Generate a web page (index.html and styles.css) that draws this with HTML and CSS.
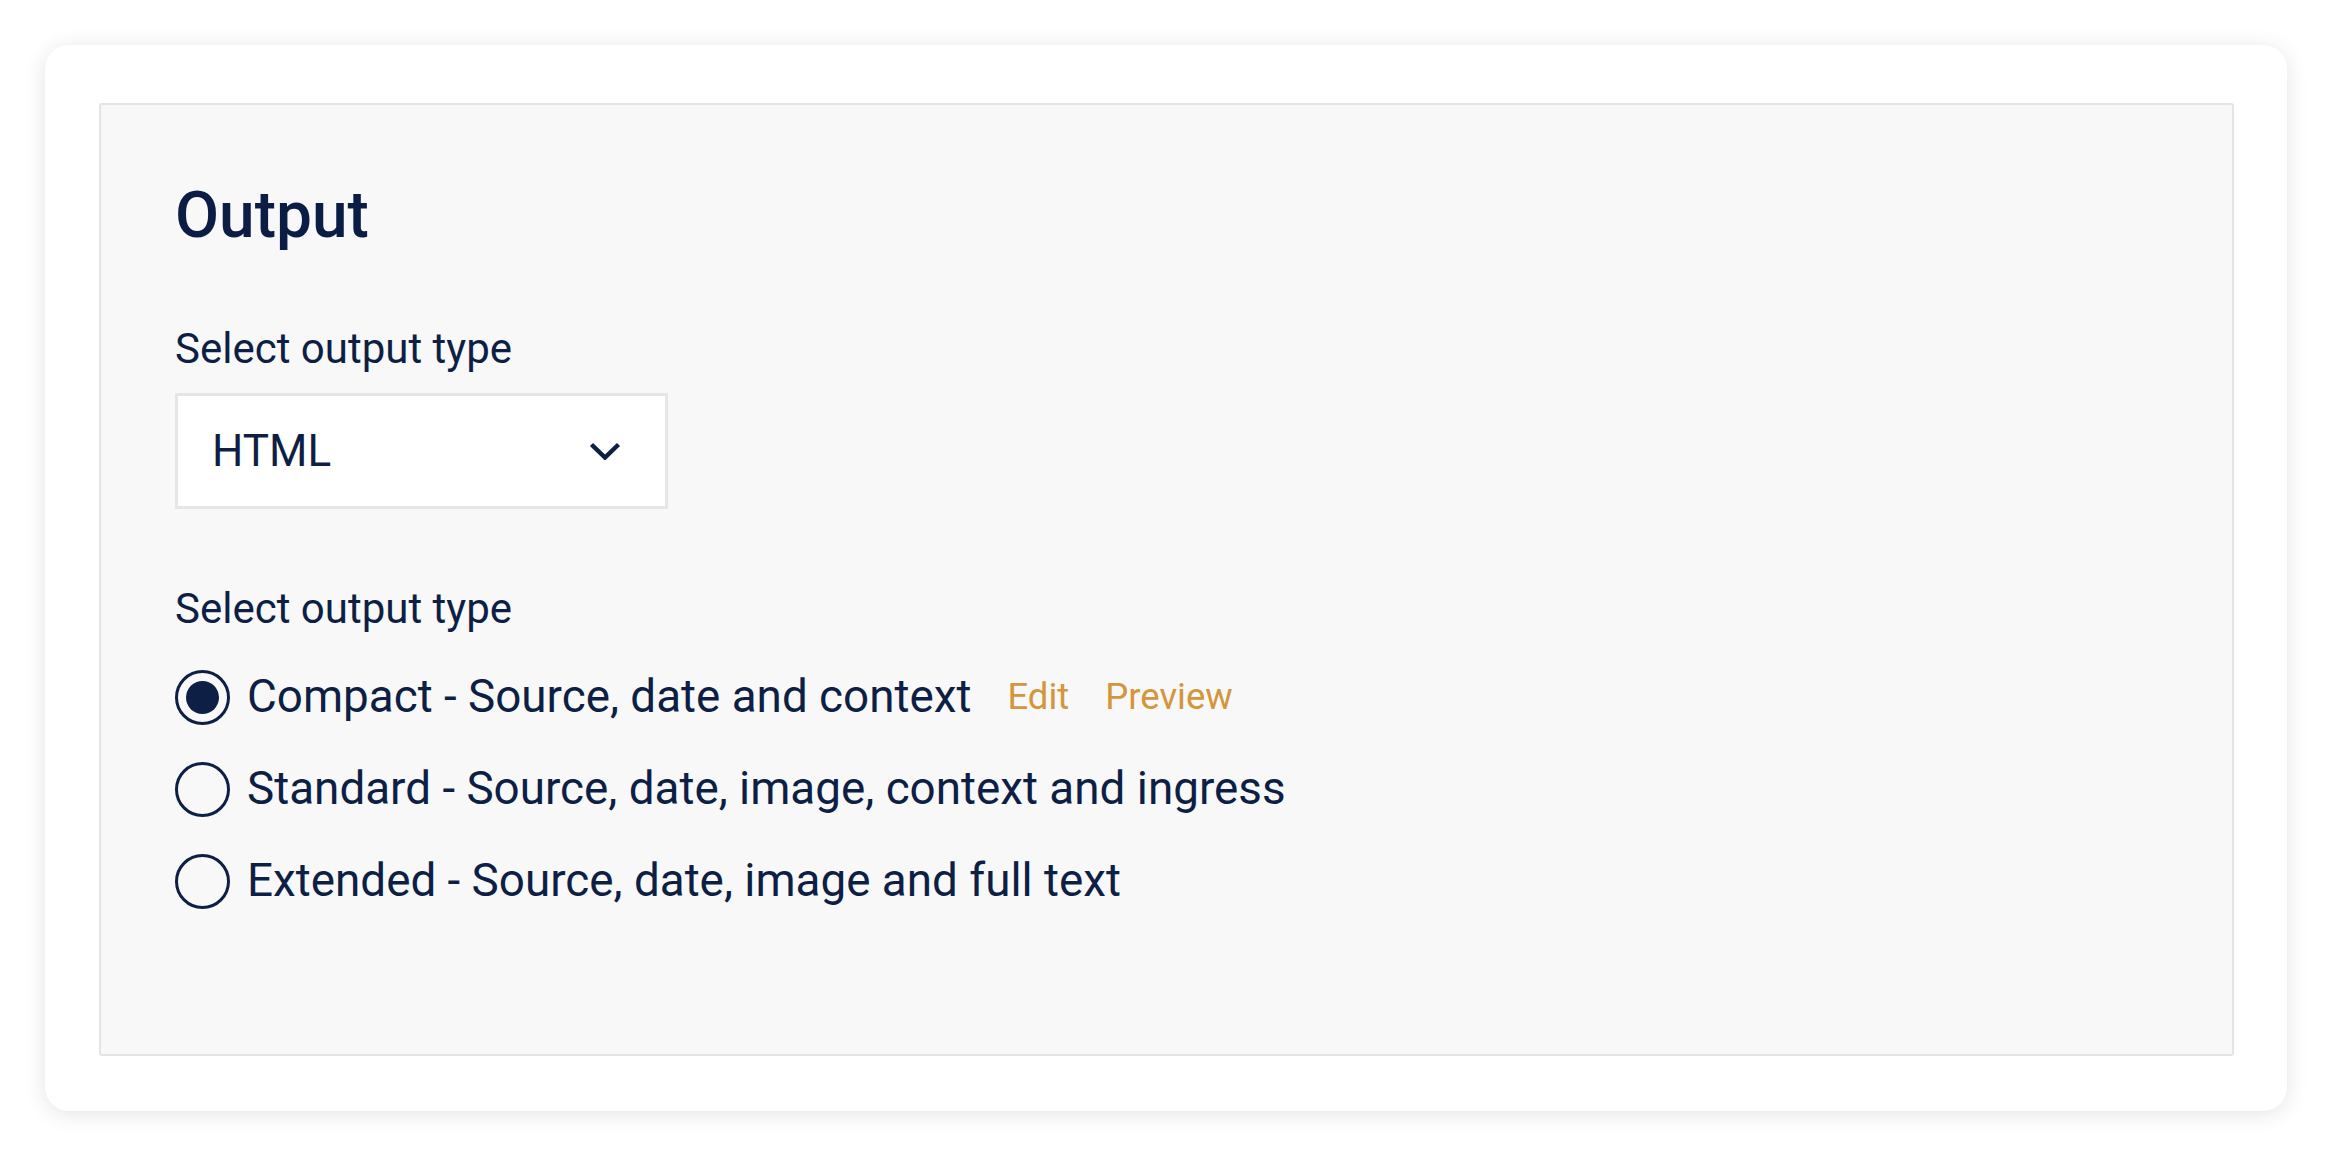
FILE: index.html
```html
<!DOCTYPE html>
<html lang="en">
<head>
<meta charset="utf-8">
<title>Output</title>
<link rel="stylesheet" href="styles.css">
</head>
<body>
<div class="card">
  <section class="panel">
    <h1 class="title">Output</h1>
    <div class="label">Select output type</div>
    <div class="select">
      <span class="select-value">HTML</span>
      <svg class="chevron" width="32" height="18" viewBox="0 0 32 18" aria-hidden="true">
        <polyline points="2.5,2.5 16,15.5 29.5,2.5" fill="none" stroke="#0d1f45" stroke-width="4.5" stroke-linejoin="miter" stroke-linecap="butt"/>
      </svg>
    </div>
    <div class="label label-second">Select output type</div>
    <div class="radios">
      <div class="radio-row">
        <span class="radio checked"><span class="dot"></span></span>
        <span class="radio-text">Compact - Source, date and context</span>
        <span class="link link-edit">Edit</span>
        <span class="link">Preview</span>
      </div>
      <div class="radio-row">
        <span class="radio"></span>
        <span class="radio-text">Standard - Source, date, image, context and ingress</span>
      </div>
      <div class="radio-row">
        <span class="radio"></span>
        <span class="radio-text">Extended - Source, date, image and full text</span>
      </div>
    </div>
  </section>
</div>
</body>
</html>
```

FILE: styles.css
```css
html, body {
  height: 100%;
}
body {
  margin: 0;
  padding: 45px;
  box-sizing: border-box;
  background: #ffffff;
  font-family: Roboto, "Liberation Sans", Arial, sans-serif;
  color: #0d1f45;
}
.card {
  height: 100%;
  box-sizing: border-box;
  background: #ffffff;
  border-radius: 24px;
  box-shadow: 0 3px 22px rgba(0, 0, 0, 0.11);
  padding: 58px 53px 55px 54px;
  display: flex;
  flex-direction: column;
}
.panel {
  flex: 1;
  background: #f8f8f8;
  border: 2px solid #e4e4e4;
  border-radius: 3px;
  padding: 73px 74px 0 74px;
}
.title {
  margin: 0 0 70px 0;
  font-size: 64px;
  line-height: 76px;
  font-weight: 500;
  color: #0b1d45;
}
.label {
  font-size: 42px;
  line-height: 50px;
  margin-bottom: 19px;
}
.label-second {
  margin-top: 75px;
  margin-bottom: 35px;
}
.select {
  width: 493px;
  height: 116px;
  box-sizing: border-box;
  background: #ffffff;
  border: 3px solid #e6e6e6;
  display: flex;
  align-items: center;
  padding: 0 44px 0 34px;
}
.select-value {
  font-size: 44px;
  line-height: 1;
}
.chevron {
  margin-left: auto;
  display: block;
}
.radios {
  display: flex;
  flex-direction: column;
  gap: 36px;
}
.radio-row {
  display: flex;
  align-items: center;
  height: 56px;
}
.radio {
  width: 55px;
  height: 55px;
  box-sizing: border-box;
  border: 3.5px solid #0d1f45;
  border-radius: 50%;
  display: flex;
  align-items: center;
  justify-content: center;
  flex: none;
  margin-right: 17px;
}
.dot {
  width: 33px;
  height: 33px;
  border-radius: 50%;
  background: #0d1f45;
}
.radio-text {
  font-size: 45.8px;
  line-height: 1;
}
.link {
  font-size: 36.5px;
  line-height: 1;
  color: #d3963b;
  margin-left: 36px;
}
.link-edit {
  margin-left: 36px;
}
```
